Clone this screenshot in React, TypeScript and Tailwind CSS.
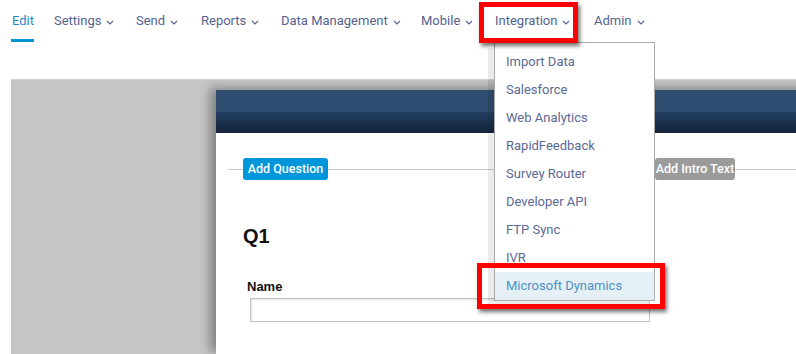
import React from 'react';

const navItems: Array<{ label: string; width: string; chevron: boolean }> = [
  { label: 'Edit', width: 'w-[42px]', chevron: false },
  { label: 'Settings', width: 'w-[82px]', chevron: true },
  { label: 'Send', width: 'w-[65px]', chevron: true },
  { label: 'Reports', width: 'w-[80px]', chevron: true },
  { label: 'Data Management', width: 'w-[140px]', chevron: true },
  { label: 'Mobile', width: 'w-[74px]', chevron: true },
  { label: 'Integration', width: 'w-[99px]', chevron: true },
  { label: 'Admin', width: 'w-[70px]', chevron: true },
];

const menuItems: string[] = [
  'Import Data',
  'Salesforce',
  'Web Analytics',
  'RapidFeedback',
  'Survey Router',
  'Developer API',
  'FTP Sync',
  'IVR',
  'Microsoft Dynamics',
];

function Chevron(): React.ReactElement {
  return (
    <svg width="8" height="5" viewBox="0 0 8 5" className="ml-[5px] mt-[2px] shrink-0">
      <path d="M1 1l3 3 3-3" fill="none" stroke="currentColor" strokeWidth="1.1" />
    </svg>
  );
}

export default function App(): React.ReactElement {
  return (
    <div className="relative w-[796px] h-[354px] overflow-hidden bg-white flex flex-col font-['Roboto',sans-serif]">
      {/* Top navigation */}
      <nav className="h-[43px] shrink-0 flex pl-[12px] text-[13px] text-[#53628f]">
        {navItems.map((item) => (
          <div key={item.label} className={`${item.width} shrink-0 h-full flex flex-col`}>
            <div className={`flex items-center h-[42px] whitespace-nowrap ${item.label === 'Edit' ? 'text-[#2a86c8]' : ''}`}>
              <span>{item.label}</span>
              {item.chevron && <Chevron />}
            </div>
            {item.label === 'Edit' && <div className="-ml-[1px] w-[23px] h-[3px] -mt-[3px] bg-[#0095d9]" />}
          </div>
        ))}
      </nav>

      {/* Grey workspace */}
      <div className="flex-1 ml-[11px] mt-[36px] bg-[#c6c6c6] border-t border-[#d2d2d2] pt-[10px] pl-[205px] overflow-hidden">
        <div className="w-[600px] h-full bg-white shadow-[-6px_-2px_10px_rgba(0,0,0,0.35)]">
          <div className="h-[43px] flex flex-col">
            <div className="h-[22px] bg-[#2f4d70]" />
            <div className="flex-1 bg-gradient-to-b from-[#213e61] to-[#15243a]" />
          </div>
          <div className="pt-[25px]">
            <div className="flex items-center pl-[12px] h-[22px]">
              <div className="w-[15px] h-px bg-[#c8c8c8]" />
              <div className="w-[85px] h-[22px] rounded-[3px] bg-[#0096db] text-white text-[12.5px] font-medium flex items-center justify-center leading-none whitespace-nowrap">
                Add Question
              </div>
              <div className="w-[327px] h-px bg-[#c8c8c8]" />
              <div className="w-[80px] h-[22px] rounded-[3px] bg-[#9b9b9b] text-white text-[12.5px] font-medium flex items-center justify-center leading-none whitespace-nowrap">
                Add Intro Text
              </div>
              <div className="flex-1 h-px bg-[#c8c8c8]" />
            </div>
            <div className="mt-[44px] pl-[27px] font-['Liberation_Sans',Arial,sans-serif] text-[20px] leading-[24px] font-bold text-[#111]">
              Q1
            </div>
            <div className="mt-[31px] pl-[31px] font-['Liberation_Sans',Arial,sans-serif] text-[13px] leading-[16px] font-bold text-[#111]">
              Name
            </div>
            <div className="mt-[3px] ml-[34px] w-[400px] h-[24px] border border-[#c4c4c4] shadow-[inset_1px_1px_2px_rgba(0,0,0,0.12)] bg-white" />
          </div>
        </div>
      </div>

      {/* Integration dropdown */}
      <div className="absolute left-[494px] top-[42px] w-[161px] bg-white border border-[#a9a9a9] pt-[5px] shadow-[-6px_6px_0_rgba(0,0,0,0.08)] text-[13px]">
        {menuItems.map((m) => (
          <div
            key={m}
            className={`h-[28px] flex items-center pl-[11px] whitespace-nowrap ${
              m === 'Microsoft Dynamics' ? 'bg-[#e5f0f6] text-[#4b90c4]' : 'text-[#5b6996]'
            }`}
          >
            {m}
          </div>
        ))}
      </div>

      {/* Annotation boxes */}
      <div className="absolute left-[479px] top-[2px] w-[99px] h-[41px] border-[5px] border-[#ff0000] shadow-[2px_3px_4px_rgba(0,0,0,0.55)]" />
      <div className="absolute left-[477px] top-[263px] w-[188px] h-[46px] border-[5px] border-[#ff0000] shadow-[2px_3px_4px_rgba(0,0,0,0.55)]" />
    </div>
  );
}
